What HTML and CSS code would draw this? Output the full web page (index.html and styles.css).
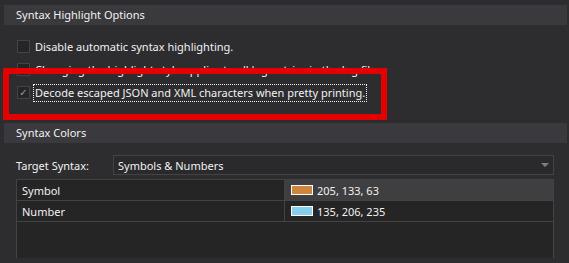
FILE: index.html
```html
<!DOCTYPE html>
<html lang="en">
<head>
    <meta charset="UTF-8">
    <title>Syntax Highlight Options</title>
    <link rel="stylesheet" href="styles.css">
</head>
<body>

<div class="section-header">Syntax Highlight Options</div>

<div class="options">
    <div class="option">
        <span class="checkbox"></span>
        <span class="option-label">Disable automatic syntax highlighting.</span>
    </div>
    <div class="option">
        <span class="checkbox"></span>
        <span class="option-label">Changing the highlight style applies to all log entries in the log file</span>
    </div>
    <div class="option">
        <span class="checkbox checked">&#10003;</span>
        <span class="option-label focused">Decode escaped JSON and XML characters when pretty printing.</span>
    </div>
    <!-- annotation box drawn over the options -->
    <div class="callout"></div>
</div>

<div class="section-header">Syntax Colors</div>

<div class="colors">
    <div class="target-row">
        <label class="target-label">Target Syntax:</label>
        <div class="combo">
            <span>Symbols &amp; Numbers</span>
            <span class="combo-arrow"></span>
        </div>
    </div>

    <div class="color-grid">
        <div class="grid-row">
            <div class="cell name">Symbol</div>
            <div class="cell value selected">
                <span class="swatch" style="background-color: rgb(205, 133, 63);"></span>
                205, 133, 63
            </div>
        </div>
        <div class="grid-row">
            <div class="cell name">Number</div>
            <div class="cell value">
                <span class="swatch" style="background-color: rgb(135, 206, 235);"></span>
                135, 206, 235
            </div>
        </div>
    </div>
</div>

</body>
</html>
```

FILE: styles.css
```css
body {
    font-family: "Noto Sans", sans-serif;
    font-size: 11px;
    background-color: #2d2d30;
    color: #f1f1f1;
    margin: 0;
    padding: 0;
    overflow: hidden;
}

.section-header {
    margin: 5px 2px 0 4px;
    height: 20px;
    line-height: 20px;
    padding-left: 12px;
    background-color: #3a3a3e;
}

.options {
    position: relative;
    padding: 10px 0 0 17px;
    margin-bottom: 19px;
}

.option {
    display: flex;
    align-items: center;
    height: 23px;
}

.checkbox {
    width: 11px;
    height: 11px;
    border: 1px solid #434346;
    background-color: #252526;
    color: #9a9a9a;
    font-family: "DejaVu Sans", sans-serif;
    font-size: 10px;
    line-height: 11px;
    text-align: center;
}

.option-label {
    margin-left: 3px;
    white-space: nowrap;
    padding: 0 1px 1px;
    border: 1px dotted transparent;
}

.option-label.focused {
    border-color: #f1f1f1;
}

.callout {
    position: absolute;
    left: 3px;
    top: 43px;
    width: 372px;
    height: 40px;
    border: 6px solid #e50000;
}

.colors {
    padding: 12px 15px 0 16px;
}

.target-row {
    display: flex;
    align-items: center;
    height: 20px;
}

.target-label {
    width: 97px;
}

.combo {
    flex: 1;
    height: 18px;
    display: flex;
    align-items: center;
    justify-content: space-between;
    padding-left: 4px;
    border: 1px solid #434346;
    background-color: #2a2a2c;
}

.combo-arrow {
    width: 0;
    height: 0;
    margin-right: 4px;
    border-left: 4px solid transparent;
    border-right: 4px solid transparent;
    border-top: 4px solid #7f7f82;
}

.color-grid {
    margin-top: 4px;
    height: 78px;
    border: 1px solid #434346;
    border-bottom: none;
    background-color: #252526;
}

.grid-row {
    display: flex;
    height: 20px;
    border-bottom: 1px solid #434346;
}

.cell {
    display: flex;
    align-items: center;
}

.cell.name {
    width: 262px;
    padding-left: 5px;
    border-right: 1px solid #434346;
}

.cell.value {
    flex: 1;
    padding-left: 6px;
}

.cell.selected {
    background-color: #3f3f41;
}

.swatch {
    width: 20px;
    height: 8px;
    border: 1px solid #ffffff;
    margin-right: 4px;
}
```
